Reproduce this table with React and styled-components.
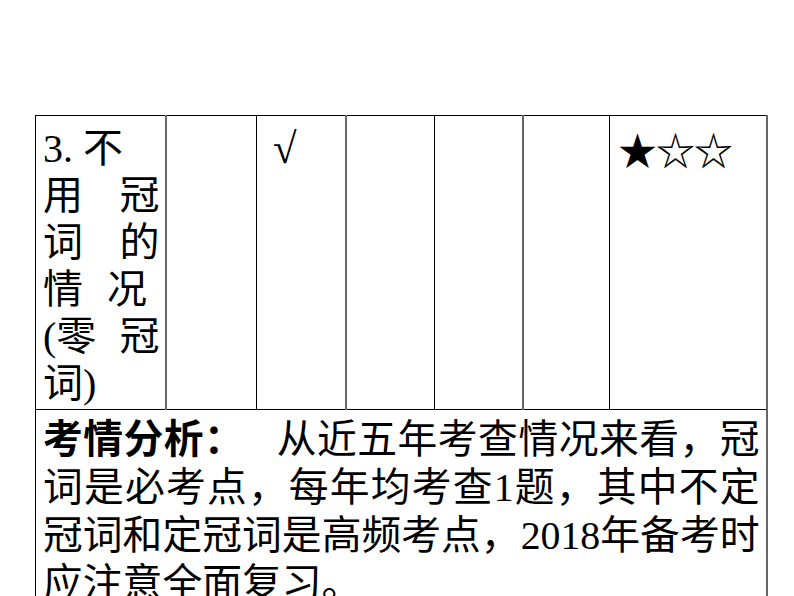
import styled, { createGlobalStyle } from "styled-components";

const Global = createGlobalStyle`
  html, body {
    margin: 0;
    padding: 0;
    background: #ffffff;
  }
`;

const Page = styled.div`
  height: 596px;
  overflow: hidden;
  padding: 115px 0 0 35px;
  box-sizing: border-box;
  font-family: "Liberation Serif", "Noto Sans CJK SC", serif;
  color: #000;
`;

const Table = styled.table`
  width: 731px;
  table-layout: fixed;
  border-collapse: collapse;
`;

const Cell = styled.td`
  height: 294px;
  box-sizing: border-box;
  vertical-align: top;
  padding: 9px 5px 0 ${(p) => p.$indent || 7}px;
  border-top: 1px solid #000;
  border-bottom: 1px solid #000;
  border-left: 1px solid #000;
  border-right: ${(p) => (p.$soft ? "2px solid #666" : "1px solid #000")};
  font-size: 40px;
  line-height: 47px;
`;

const Line = styled.div`
  height: 47px;
  text-align: left;
  text-align-last: ${(p) => (p.$spread ? "justify" : "left")};
  word-spacing: ${(p) => p.$gap || 0}px;
`;

const Word = styled.span`
  display: inline-block;
  white-space: nowrap;
`;

const Check = styled.span`
  font-family: "Liberation Serif", serif;
  font-size: 43px;
  vertical-align: 4px;
`;

const Stars = styled.span`
  font-family: "Noto Sans CJK SC", sans-serif;
  font-size: 39px;
  letter-spacing: -1px;
`;

const Summary = styled.td`
  box-sizing: border-box;
  vertical-align: top;
  padding: 6px 6px 40px 7px;
  border-top: 1px solid #000;
  border-left: 1px solid #000;
  border-right: 2px solid #666;
  font-size: 39.8px;
  line-height: 48px;
  text-align: justify;
`;

const Label = styled.b`
  font-weight: 700;
`;

const Gap = styled.span`
  display: inline-block;
  width: 32px;
`;

const titleLines = [
  { words: ["3. 不"] },
  { words: ["用", "冠"], spread: true },
  { words: ["词", "的"], spread: true },
  { words: ["情", "况"], gap: 14 },
  { words: ["(零", "冠"], spread: true },
  { words: ["词)"] },
];

const widths = [130, 91, 89, 89, 88, 87, 157];

export default function App() {
  return (
    <Page>
      <Global />
      <Table>
        <colgroup>
          {widths.map((w, i) => (
            <col key={i} style={{ width: w }} />
          ))}
        </colgroup>
        <tbody>
          <tr>
            <Cell $soft>
              {titleLines.map((l, i) => (
                <Line key={i} $spread={l.spread} $gap={l.gap}>
                  {l.words.map((w, j) => (
                    <span key={j}>
                      {j > 0 && " "}
                      <Word>{w}</Word>
                    </span>
                  ))}
                </Line>
              ))}
            </Cell>
            <Cell />
            <Cell $soft $indent={16}>
              <Check>√</Check>
            </Cell>
            <Cell />
            <Cell $soft />
            <Cell />
            <Cell $soft $indent={8}>
              <Stars>★☆☆</Stars>
            </Cell>
          </tr>
          <tr>
            <Summary colSpan={7}>
              <Label>考情分析：</Label>
              <Gap />
              从近五年考查情况来看，冠词是必考点，每年均考查1题，其中不定冠词和定冠词是高频考点，2018年备考时应注意全面复习。
            </Summary>
          </tr>
        </tbody>
      </Table>
    </Page>
  );
}
